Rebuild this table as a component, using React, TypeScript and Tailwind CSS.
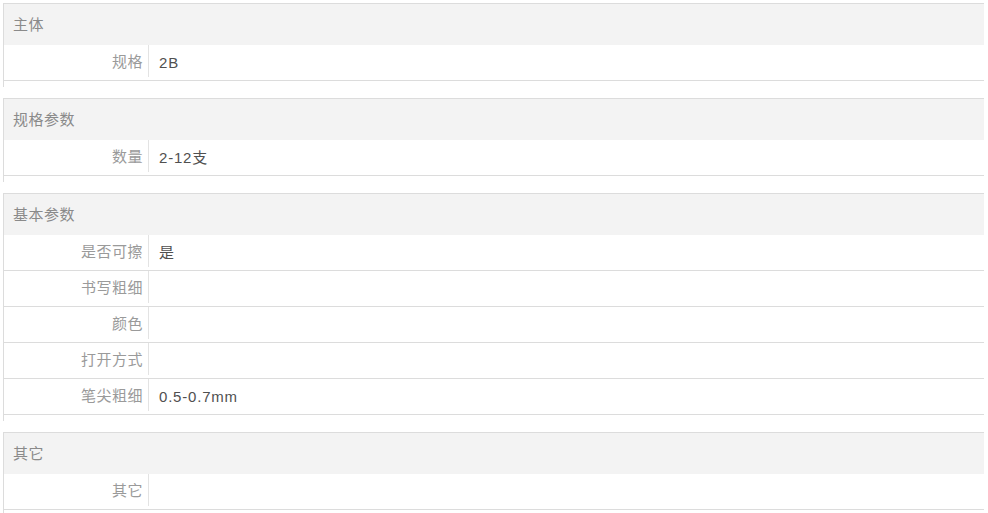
const groups: { title: string; rows: [string, string][] }[] = [
  { title: "主体", rows: [["规格", "2B"]] },
  { title: "规格参数", rows: [["数量", "2-12支"]] },
  {
    title: "基本参数",
    rows: [
      ["是否可擦", "是"],
      ["书写粗细", ""],
      ["颜色", ""],
      ["打开方式", ""],
      ["笔尖粗细", "0.5-0.7mm"],
    ],
  },
  { title: "其它", rows: [["其它", ""]] },
];

export default function App() {
  return (
    <div
      className="w-[988px] h-[513px] overflow-hidden bg-white pt-[3px] pl-[3px] pr-[4px] text-[15px] tracking-[0.5px]"
      style={{ fontFamily: '"Liberation Sans", "Noto Sans CJK SC", sans-serif' }}
    >
      {groups.map((g) => (
        <div key={g.title} className="border-t border-l border-[#dcdcdc] pb-[6px] mb-[11px]">
          <div className="h-[41px] bg-[#f3f3f3] flex items-center pl-[9px] pt-[2px] text-[#8a8a8a]">{g.title}</div>
          {g.rows.map(([k, v]) => (
            <div key={k} className="h-[36px] flex border-b border-[#dcdcdc]">
              <div className="w-[145px] shrink-0 flex items-center justify-end pr-[5px] pt-[3px] mb-[3px] text-[#9a9a9a] border-r border-[#e3e3e3]">
                {k}
              </div>
              <div className="flex items-center pl-[10px] pt-[1px] text-[#505050] tracking-[0.8px]">{v}</div>
            </div>
          ))}
        </div>
      ))}
    </div>
  );
}
